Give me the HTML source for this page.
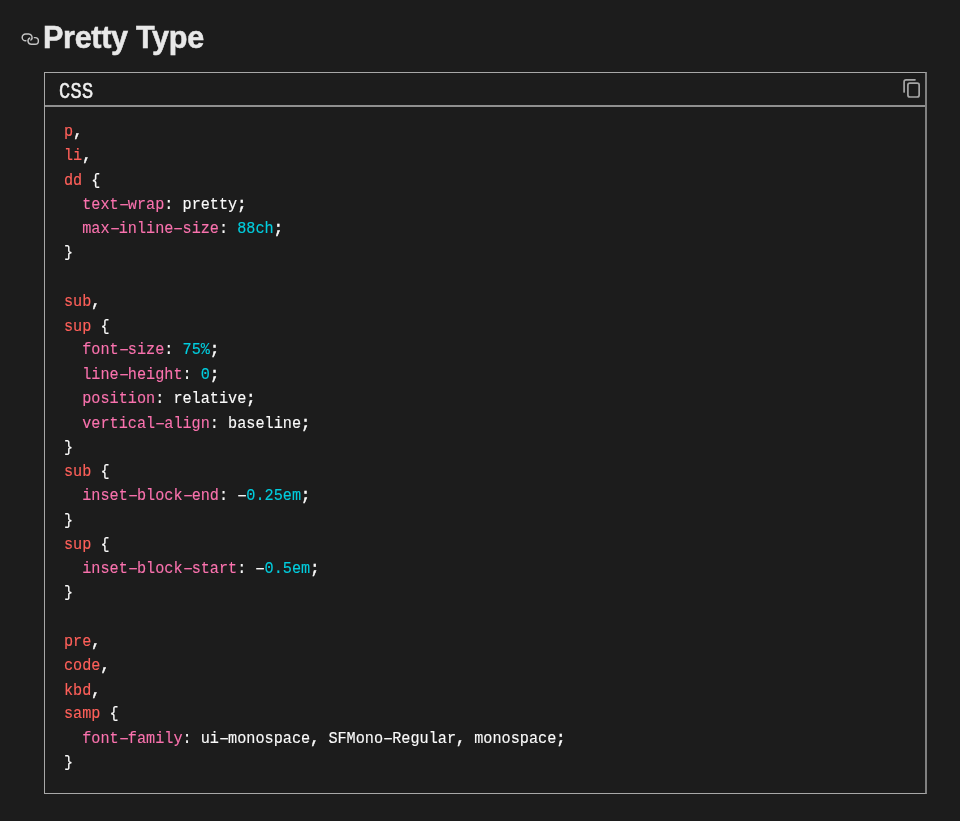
<!DOCTYPE html>
<html><head><meta charset="utf-8">
<style>
html,body{margin:0;padding:0;}
body{width:960px;height:821px;background:#1c1c1c;overflow:hidden;position:relative;font-family:"Liberation Sans",sans-serif;}
.link{position:absolute;left:0;top:0;width:60px;height:60px;}
h2{position:absolute;left:43px;top:17.8px;margin:0;font-size:30.6px;line-height:38px;font-weight:bold;color:#e8e8e8;letter-spacing:-0.32px;-webkit-text-stroke:0.5px #e8e8e8;white-space:nowrap;will-change:transform;}
.box{position:absolute;left:44px;top:72px;width:880px;height:720px;border:1px solid #a8a8a8;border-right:2px solid #808080;}
.hdr{position:absolute;left:0;top:0;width:880px;height:32px;border-bottom:2px solid #8f8f8f;}
.lang{position:absolute;left:13.6px;top:6.0px;font-family:"Liberation Mono",monospace;font-size:18.6px;letter-spacing:0.4px;line-height:24px;color:#f0f0f0;transform-origin:0 0;transform:scaleY(1.17);will-change:transform;-webkit-text-stroke:0.45px currentColor;}
.copy{position:absolute;left:880px;top:60px;width:60px;height:60px;}
pre{position:absolute;left:18.6px;top:47.2px;margin:0;font-family:"Liberation Mono",monospace;font-size:15.19px;line-height:22.47px;color:#fafafa;transform-origin:0 0;transform:scaleY(1.08);will-change:transform;-webkit-text-stroke:0.12px currentColor;}
.s{color:#ff605a;}
.p{color:#fa72ae;}
.n{color:#00cedf;}
.c{font-weight:normal;-webkit-text-stroke:0.5px currentColor;}
.h{font-style:normal;display:inline-block;transform:translateX(0.5px) scaleX(1.12);-webkit-text-stroke:0.25px currentColor;}
</style></head><body>
<svg class="link" viewBox="0 0 60 60" fill="none" stroke="#c4c4c4" stroke-width="1.45" stroke-linecap="round">
<path d="M25.9 40.8 H25.6 A3.4 3.4 0 0 1 25.6 34 H28.7 A3.4 3.4 0 0 1 30.9 40.0"/>
<path d="M29.65 38.04 A3.3 3.3 0 0 0 31.3 44.2 H35.1 A3.3 3.3 0 0 0 35.1 37.6 H34.3"/>
</svg>
<h2>Pretty Type</h2>
<div class="box">
<div class="hdr"><div class="lang">CSS</div>

</div>
<pre><span class="s">p</span><b class="c">,</b>
<span class="s">li</span><b class="c">,</b>
<span class="s">dd</span> {
  <span class="p">text<i class="h">–</i>wrap</span>: pretty<b class="c">;</b>
  <span class="p">max<i class="h">–</i>inline<i class="h">–</i>size</span>: <span class="n">88ch</span><b class="c">;</b>
}

<span class="s">sub</span><b class="c">,</b>
<span class="s">sup</span> {
  <span class="p">font<i class="h">–</i>size</span>: <span class="n">75%</span><b class="c">;</b>
  <span class="p">line<i class="h">–</i>height</span>: <span class="n">0</span><b class="c">;</b>
  <span class="p">position</span>: relative<b class="c">;</b>
  <span class="p">vertical<i class="h">–</i>align</span>: baseline<b class="c">;</b>
}
<span class="s">sub</span> {
  <span class="p">inset<i class="h">–</i>block<i class="h">–</i>end</span>: <i class="h">–</i><span class="n">0.25em</span><b class="c">;</b>
}
<span class="s">sup</span> {
  <span class="p">inset<i class="h">–</i>block<i class="h">–</i>start</span>: <i class="h">–</i><span class="n">0.5em</span><b class="c">;</b>
}

<span class="s">pre</span><b class="c">,</b>
<span class="s">code</span><b class="c">,</b>
<span class="s">kbd</span><b class="c">,</b>
<span class="s">samp</span> {
  <span class="p">font<i class="h">–</i>family</span>: ui<i class="h">–</i>monospace<b class="c">,</b> SFMono<i class="h">–</i>Regular<b class="c">,</b> monospace<b class="c">;</b>
}</pre>
</div>
<svg class="copy" viewBox="880 60 60 60" fill="none" stroke="#a6a6a6" stroke-width="1.7" stroke-linecap="round">
<path d="M904.1 92.0 V81.8 A2 2 0 0 1 906.1 79.8 H915.0"/>
<rect x="907.9" y="83.1" width="11.25" height="13.9" rx="2"/>
</svg>
</body></html>
